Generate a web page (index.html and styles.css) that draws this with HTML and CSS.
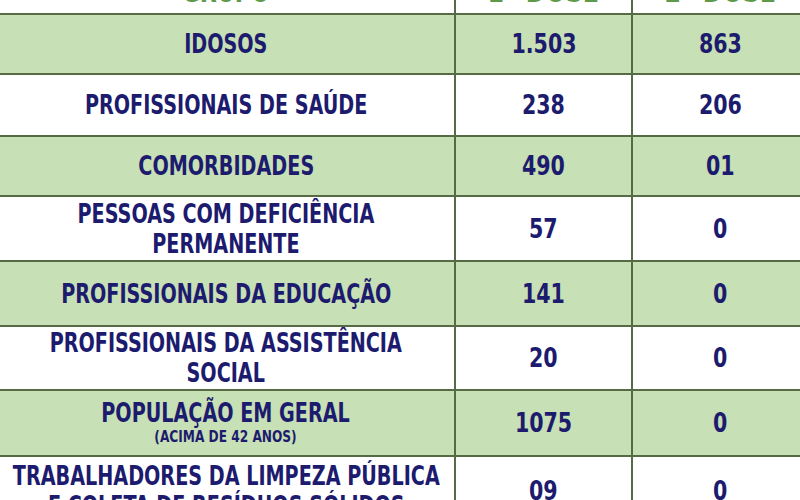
FILE: index.html
```html
<!DOCTYPE html>
<html lang="pt-BR">
<head>
<meta charset="utf-8">
<title>Vacinação</title>
<link rel="stylesheet" href="styles.css">
</head>
<body>
<div class="frame">
<table class="vac">
  <colgroup>
    <col class="c-group">
    <col class="c-dose">
    <col class="c-dose">
  </colgroup>
  <tr class="head">
    <th><span class="t">GRUPO</span></th>
    <th><span class="n">1ª DOSE</span></th>
    <th><span class="n">2ª DOSE</span></th>
  </tr>
  <tr class="green h60">
    <td><span class="t">IDOSOS</span></td><td><span class="n">1.503</span></td><td><span class="n">863</span></td>
  </tr>
  <tr class="white h62">
    <td><span class="t">PROFISSIONAIS DE SAÚDE</span></td><td><span class="n">238</span></td><td><span class="n">206</span></td>
  </tr>
  <tr class="green h60">
    <td><span class="t">COMORBIDADES</span></td><td><span class="n">490</span></td><td><span class="n">01</span></td>
  </tr>
  <tr class="white h65">
    <td><span class="t">PESSOAS COM DEFICIÊNCIA<br>PERMANENTE</span></td><td><span class="n">57</span></td><td><span class="n">0</span></td>
  </tr>
  <tr class="green h65">
    <td><span class="t">PROFISSIONAIS DA EDUCAÇÃO</span></td><td><span class="n">141</span></td><td><span class="n">0</span></td>
  </tr>
  <tr class="white h64">
    <td><span class="t">PROFISSIONAIS DA ASSISTÊNCIA<br>SOCIAL</span></td><td><span class="n">20</span></td><td><span class="n">0</span></td>
  </tr>
  <tr class="green h66">
    <td><span class="t">POPULAÇÃO EM GERAL<span class="sub">(ACIMA DE 42 ANOS)</span></span></td><td><span class="n">1075</span></td><td><span class="n">0</span></td>
  </tr>
  <tr class="white h70">
    <td><span class="t">TRABALHADORES DA LIMPEZA PÚBLICA<br>E COLETA DE RESÍDUOS SÓLIDOS</span></td><td><span class="n">09</span></td><td><span class="n">0</span></td>
  </tr>
</table>
</div>
</body>
</html>
```
FILE: styles.css
```css
html, body {
  margin: 0;
  padding: 0;
  background: #ffffff;
}
.frame {
  width: 800px;
  height: 500px;
  overflow: hidden;
}
.vac {
  border-collapse: collapse;
  table-layout: fixed;
  width: 812px;
  margin-left: -4px;
  margin-top: -46px;
  font-family: "DejaVu Sans Condensed", "DejaVu Sans", sans-serif;
  font-weight: bold;
  color: #1c1b6e;
}
.c-group { width: 458px; }
.c-dose { width: 177px; }
.vac th, .vac td {
  border: 2px solid #566b45;
  text-align: center;
  vertical-align: middle;
  padding: 0;
  font-size: 26px;
  line-height: 30px;
  white-space: nowrap;
}
.t, .n {
  display: inline-block;
  white-space: nowrap;
  margin: 0 -60px;
}
.t { transform: scaleX(0.82); }
.n { transform: scaleX(0.88); }
.vac th {
  height: 51px;
  color: #5e9a4a;
  font-size: 30px;
  vertical-align: bottom;
  line-height: 1;
  padding-bottom: 6px;
}
.green td { background: #c7e0b5; }
.white td { background: #ffffff; }
.h60 td { height: 58px; }
.h62 td { height: 60px; }
.h64 td { height: 62px; }
.h65 td { height: 63px; }
.h66 td { height: 64px; }
.h70 td { height: 68px; }
.sub {
  display: block;
  font-size: 16.5px;
  line-height: 18px;
}
```
